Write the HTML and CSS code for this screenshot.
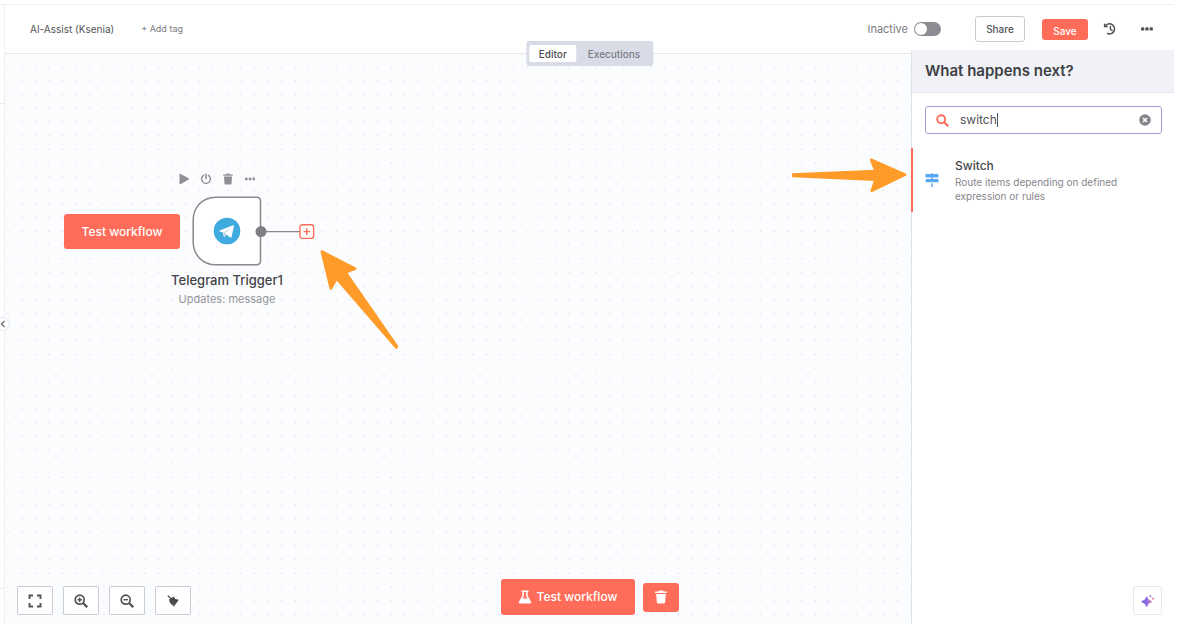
FILE: index.html
```html
<!DOCTYPE html>
<html lang="en">
<head>
<meta charset="utf-8">
<meta name="viewport" content="width=device-width, initial-scale=1">
<title>AI-Assist (Ksenia)</title>
<link rel="stylesheet" href="styles.css">
</head>
<body>
<div class="app">
  <aside class="rail">
    <button class="rail-toggle" type="button" aria-label="Expand sidebar">
      <svg width="6" height="8" viewBox="0 0 6 8"><path d="M4.600 1L1.500 4l3.100 3" fill="none" stroke="#77787d" stroke-width="1.500"/></svg>
    </button>
  </aside>
  <div class="main">
    <header class="topbar">
      <h1 class="workflow-name">AI-Assist (Ksenia)</h1>
      <button class="add-tag" type="button">+ Add tag</button>
      <div class="actions">
        <label class="activator"><span>Inactive</span><input class="switch" type="checkbox" role="switch"></label>
        <button class="btn-outline" type="button">Share</button>
        <button class="btn-save" type="button">Save</button>
        <button class="icon-btn history" type="button" aria-label="Workflow history">
          <svg width="14" height="14" viewBox="0 0 14 14" fill="none" stroke="#525356" stroke-width="1.700"><path d="M3 3.300A5 5 0 1 1 4.100 11.300"/><path d="M7.400 4v3.300l2.100 1.500" stroke-width="1.400"/><path d="M.9.900v4.400h4.400z" fill="#525356" stroke="none"/></svg>
        </button>
        <button class="icon-btn" type="button" aria-label="More options">
          <svg width="14" height="14" viewBox="0 0 14 14" fill="#525356"><rect x="1" y="5.300" width="3.300" height="3.300" rx="1.200"/><rect x="5.300" y="5.300" width="3.300" height="3.300" rx="1.200"/><rect x="9.600" y="5.300" width="3.300" height="3.300" rx="1.200"/></svg>
        </button>
      </div>
      <nav class="tabs">
        <button class="tab tab-active" type="button">Editor</button>
        <button class="tab" type="button">Executions</button>
      </nav>
    </header>

    <main class="canvas">
      <svg class="grid" width="100%" height="100%" aria-hidden="true">
        <defs><pattern id="dots" x="-4" y="6" width="13.680" height="13.680" patternUnits="userSpaceOnUse"><circle cx="7" cy="7" r=".75" fill="#d9dbe1"/></pattern></defs>
        <rect width="100%" height="100%" fill="url(#dots)"/>
      </svg>

      <button class="btn-primary node-run" type="button">Test workflow</button>
      <div class="node-tools">
        <button class="icon-btn" type="button" aria-label="Execute step"><svg width="12" height="12" viewBox="0 0 12 12"><path d="M1.500 1.300v9.400q0 .9.800.5l8.500-4.700q.7-.5 0-1L2.300.8q-.8-.4-.8.5z" fill="#8e8f95"/></svg></button>
        <button class="icon-btn" type="button" aria-label="Deactivate"><svg width="12" height="12" viewBox="0 0 12 12" fill="none" stroke="#8e8f95" stroke-width="1.500" stroke-linecap="round"><path d="M3.600 2.300a4.400 4.400 0 1 0 4.800 0M6 1v4.600"/></svg></button>
        <button class="icon-btn" type="button" aria-label="Delete"><svg width="12" height="12" viewBox="0 0 12 12" fill="#8e8f95"><path d="M1.300 1.400h2.800L4.700.6h2.600l.6.8h2.800v1.300H1.300zM2 3.400h8l-.5 7.100q-.1.900-1 .9h-5q-.9 0-1-.9z"/></svg></button>
        <button class="icon-btn" type="button" aria-label="More"><svg width="12" height="12" viewBox="0 0 12 12" fill="#8e8f95"><circle cx="2.300" cy="6" r="1.450"/><circle cx="6" cy="6" r="1.450"/><circle cx="9.700" cy="6" r="1.450"/></svg></button>
      </div>
      <svg class="node" width="70" height="70" viewBox="0 0 70 70">
        <path d="M24 1.200h40.500q4 0 4 4v59.600q0 4-4 4H24C10 68.800 1.200 58 1.200 46V24C1.200 12 10 1.200 24 1.200z" fill="#fff" stroke="#88898e" stroke-width="1.500"/>
        <g transform="translate(21 21)"><circle cx="14" cy="14" r="13.300" fill="#3fabdf"/><path d="M6.200 13.800L20 8.200q1.100-.3.900.8l-2.300 11q-.3 1.100-1.300.5l-3.700-2.700-1.900 1.900q-.5.500-.9-.2l-1.200-4.200-3.400-1q-.9-.2 0-.5z" fill="#fff"/><path d="M10.300 15.400l7.800-5-6.100 6.200-.3 3-1-.6z" fill="#c7dcea"/><path d="M12 16.600l1.600 1.200-1.900 1.900z" fill="#a5c9df"/></g>
      </svg>
      <svg class="wire" width="60" height="16" viewBox="0 0 60 16"><path d="M6 7.600h40" stroke="#88898e" stroke-width="1.400"/><circle cx="6" cy="7.600" r="5.500" fill="#7e7f84"/></svg>
      <button class="node-add" type="button" aria-label="Add node"><svg width="16" height="16" viewBox="0 0 16 16"><rect x="1" y=".8" width="13.600" height="13.600" rx="2.500" fill="#fff" stroke="#ff6d5a" stroke-width="1.400"/><path d="M7.800 4.300v6.600M4.500 7.600h6.600" stroke="#ff6d5a" stroke-width="1.400"/></svg></button>
      <div class="node-label">
        <div class="node-title">Telegram Trigger1</div>
        <div class="node-sub">Updates: message</div>
      </div>

      <svg class="arrow arrow-add" width="90" height="110" viewBox="0 0 90 110"><path d="M6.800 7.500L40.200 24.700 30.500 28.200 82 102.500 81.200 103.500 21.500 34.500 15.800 44.500z" fill="#ff9b28" stroke="#ff9b28" stroke-width="2.600" stroke-linejoin="round"/></svg>
      <svg class="arrow arrow-result" width="130" height="50" viewBox="0 0 130 50"><path d="M8.200 24.600L90.500 21 86.200 9.800 120.200 24.600 86.700 40.800 90.500 29.600 8.200 25.900z" fill="#ff9b28" stroke="#ff9b28" stroke-width="2.600" stroke-linejoin="round"/></svg>

      <div class="view-controls">
        <button class="control" type="button" aria-label="Fit view"><svg width="14" height="14" viewBox="0 0 14 14" fill="none" stroke="#525356" stroke-width="1.900"><path d="M1.500 5V1.500H5M9 1.500h3.500V5M12.500 9v3.500H9M5 12.500H1.500V9"/></svg></button>
        <button class="control" type="button" aria-label="Zoom in"><svg width="14" height="14" viewBox="0 0 14 14" fill="none" stroke="#525356"><circle cx="5.700" cy="5.700" r="4.500" stroke-width="1.700"/><path d="M9 9l4.200 4.200" stroke-width="2.300"/><path d="M5.700 3.500v4.400M3.500 5.700h4.400" stroke-width="1.400"/></svg></button>
        <button class="control" type="button" aria-label="Zoom out"><svg width="14" height="14" viewBox="0 0 14 14" fill="none" stroke="#525356"><circle cx="5.700" cy="5.700" r="4.500" stroke-width="1.700"/><path d="M9 9l4.200 4.200" stroke-width="2.300"/><path d="M3.500 5.700h4.400" stroke-width="1.400"/></svg></button>
        <button class="control" type="button" aria-label="Tidy up"><svg width="14" height="14" viewBox="0 0 14 14"><path d="M1.700 1.700l3.700 3.100" stroke="#525356" stroke-width="1.300"/><path d="M3 5.600L8 2.600l1.200 2.300 3.600.9L8 12.400 5.900 10.800 4.200 9z" fill="#46474a"/><path d="M6 9l1.500-1.300M7 11l2-1.800" stroke="#8b8c90" stroke-width=".6"/></svg></button>
      </div>
      <div class="run-controls">
        <button class="btn-primary run" type="button"><svg width="14" height="14" viewBox="0 0 14 14"><path d="M3.500.5h7v1.600h-.8v3.600l3.400 6q.7 1.800-1.100 1.800H2q-1.800 0-1.100-1.800l3.400-6V2.100h-.8zM5.900 2.100v4L4.600 8.600h4.800L8.100 6.100v-4z" fill="#fff" fill-rule="evenodd"/></svg>Test workflow</button>
        <button class="btn-primary clear" type="button" aria-label="Clear execution"><svg width="14" height="14" viewBox="0 0 14 14" fill="#fff"><path d="M1 1.600h3.500L5 .5h4l.5 1.100H13v1.500H1zM2.200 3.900h9.600l-.6 8.200q-.1 1.400-1.300 1.400H4.100q-1.200 0-1.300-1.400z"/></svg></button>
      </div>
    </main>

    <section class="panel">
      <h2 class="panel-title">What happens next?</h2>
      <label class="search">
        <svg width="13" height="13" viewBox="0 0 13 13" fill="none" stroke="#ff6d5a"><circle cx="5.200" cy="5.200" r="4" stroke-width="1.900"/><path d="M8.200 8.200l4 4" stroke-width="2.200"/></svg>
        <input class="search-input" type="text" value="switch" aria-label="Search nodes"><span class="caret"></span>
        <button class="search-clear icon-btn" type="button" aria-label="Clear search"><svg width="12" height="12" viewBox="0 0 12 12"><circle cx="6" cy="6" r="5.800" fill="#85868b"/><path d="M4 4l4 4M8 4l-4 4" stroke="#fff" stroke-width="1.700"/></svg></button>
      </label>
      <a class="result" href="#switch">
        <svg width="14" height="14" viewBox="0 0 14 14" fill="#5ba8f5"><path d="M6.300 0h1.400v1h5.200l.9 1.700-.9 1.700H.5V1h5.800zM1.300 6h12.200v3.300H1.300L.2 7.700zM6.300 4h1.400v2.500H6.300zM6.300 10.300h1.400V14H6.300z"/></svg>
        <span class="result-text">
          <span class="result-name">Switch</span>
          <span class="result-desc">Route items depending on defined expression or rules</span>
        </span>
      </a>
      <button class="assistant" type="button" aria-label="Assistant">
        <svg width="14" height="14" viewBox="0 0 14 14"><defs><linearGradient id="spark"><stop offset="0" stop-color="#5b60e8"/><stop offset=".6" stop-color="#9b6ddd"/><stop offset="1" stop-color="#dd7fae"/></linearGradient></defs><path d="M5.700 2.800q.8 3.900 5 4.900-4.200 1-5 4.900-.8-3.900-5-4.900 4.200-1 5-4.900z" fill="url(#spark)" stroke="url(#spark)"/><path d="M9.300.4l.6 1.200 1.200.6-1.200.6-.6 1.200-.6-1.200-1.200-.6 1.200-.6z" fill="#b58be0"/><path d="M12 3l.6 1.200 1.200.6-1.200.6-.6 1.200-.6-1.200-1.200-.6 1.200-.6z" fill="#e08bb8"/></svg>
      </button>
    </section>
  </div>
</div>
</body>
</html>
```
FILE: styles.css
```css
* { box-sizing: border-box; }

body {
  margin: 0;
  background: #fff;
  color: #525356;
  font: 11px/16px Inter, "Liberation Sans", sans-serif;
}

button, input { font: inherit; color: inherit; }
button { cursor: pointer; padding: 0; border: 0; }
svg { display: block; flex: none; }
h1, h2 { margin: 0; }

.app {
  display: flex;
  min-height: calc(100vh - 4px);
  margin: 4px 6px 0 0;
  border-top: 1px solid #eeeff2;
}

.rail {
  position: relative;
  display: flex;
  flex-direction: column;
  width: 5px;
  padding: 98px 0 35px;
  border-right: 1px solid #edf0f4;
}

.rail::before, .rail::after {
  content: "";
  height: 1px;
  background: #e9ecf1;
}

.rail::after { margin-top: auto; }

.rail-toggle {
  position: absolute;
  top: 312px;
  left: -4px;
  z-index: 2;
  width: 14px;
  height: 14px;
  display: flex;
  align-items: center;
  justify-content: center;
  border: 1px solid #e4e7ee;
  border-radius: 50%;
  background: #fff;
}

.main {
  position: relative;
  flex: 1;
  display: flex;
  flex-direction: column;
}

.topbar {
  position: relative;
  display: flex;
  align-items: center;
  height: 49px;
  padding: 0 20px 0 25px;
  border-bottom: 1px solid #e6e8ed;
}

.workflow-name { font-size: 10px; font-weight: 400; }

.add-tag {
  margin-left: 27px;
  background: none;
  color: #77787d;
  font-size: 9px;
}

.actions {
  display: flex;
  align-items: center;
  margin-left: auto;
}

.activator {
  display: flex;
  align-items: center;
  gap: 6px;
  margin-right: 34px;
  color: #7b7c82;
}

.switch {
  appearance: none;
  width: 27px;
  height: 14px;
  margin: 0;
  padding: 1px;
  border-radius: 7px;
  background: #8c8d93;
}

.switch::before {
  content: "";
  display: block;
  width: 12px;
  height: 12px;
  border-radius: 50%;
  background: #fff;
}

.btn-outline {
  width: 50px;
  height: 26px;
  border: 1px solid #c9ccd4;
  border-radius: 3px;
  background: #fff;
  font-size: 10px;
  font-weight: 500;
}

.btn-save {
  width: 46px;
  height: 21px;
  margin: 0 15px 0 17px;
  padding-top: 3px;
  border-radius: 3px;
  background: #ff6d5a;
  color: #fff;
  font-size: 10px;
  font-weight: 500;
}

.icon-btn { background: none; }
.history { margin-right: 23px; }

.tabs {
  position: absolute;
  bottom: -13px;
  left: 50%;
  z-index: 1;
  display: flex;
  gap: 1px;
  padding: 4px 3px;
  border-radius: 3px;
  background: #d8dce7;
  transform: translateX(-50%);
}

.tab {
  height: 17px;
  padding: 0 10px;
  border-radius: 2px;
  background: none;
  color: #7b7c84;
  font-size: 10px;
  font-weight: 500;
}

.tab-active { background: #fff; color: #4b4c50; }

.canvas {
  position: relative;
  flex: 1;
  overflow: hidden;
  background: #fbfcfe;
}

.grid { position: absolute; inset: 0; }

.btn-primary {
  border-radius: 3px;
  background: #ff6d5a;
  color: #fff;
  font-size: 12px;
  font-weight: 500;
}

.node-run {
  position: absolute;
  left: 59px;
  top: 160px;
  width: 116px;
  height: 35px;
}

.node-tools {
  position: absolute;
  left: 173px;
  top: 119px;
  display: flex;
  gap: 10px;
}

.node { position: absolute; left: 187px; top: 142px; }

.wire { position: absolute; left: 250px; top: 170px; }

.node-add {
  position: absolute;
  left: 294px;
  top: 170px;
  background: none;
}

.node-label {
  position: absolute;
  left: 142px;
  top: 216px;
  width: 160px;
  text-align: center;
}

.node-title { font-size: 13px; line-height: 20px; font-weight: 500; color: #444548; }
.node-sub { font-size: 11px; line-height: 18px; color: #94959b; }

.arrow { position: absolute; }
.arrow-add { left: 310px; top: 190px; }
.arrow-result { right: 259px; top: 96px; }

.view-controls {
  position: absolute;
  left: 12px;
  bottom: 9px;
  display: flex;
  gap: 10px;
}

.control {
  width: 36px;
  height: 29px;
  display: flex;
  align-items: center;
  justify-content: center;
  border: 1px solid #c9ccd4;
  border-radius: 2px;
  background: #fff;
}

.run-controls {
  position: absolute;
  left: 50%;
  bottom: 9px;
  display: flex;
  align-items: center;
  gap: 8px;
  transform: translateX(-50%);
}

.run {
  display: flex;
  align-items: center;
  justify-content: center;
  gap: 5px;
  width: 134px;
  height: 36px;
}

.clear {
  display: flex;
  align-items: center;
  justify-content: center;
  width: 36px;
  height: 29px;
}

.panel {
  position: absolute;
  top: 45px;
  right: 0;
  bottom: 0;
  width: 263px;
  border-left: 1px solid #dfe2e9;
  background: #fff;
}

.panel-title {
  padding: 10px 13px;
  border-bottom: 1px solid #e2e5ed;
  background: #f0f2f8;
  color: #3f4043;
  font-size: 15px;
  line-height: 22px;
  font-weight: 600;
}

.search {
  display: flex;
  align-items: center;
  height: 28px;
  margin: 13px 12px 14px 13px;
  padding: 0 10px;
  border: 1px solid #a39cdc;
  border-radius: 3px;
}

.search-input {
  field-sizing: content;
  margin-left: 11px;
  padding: 0;
  border: 0;
  outline: 0;
  background: none;
  font-size: 12px;
}

.caret { width: 1px; height: 14px; background: #525356; }
.search-clear { margin-left: auto; }

.result {
  display: flex;
  align-items: center;
  gap: 16px;
  margin-left: -1px;
  padding: 9px 40px 9px 12px;
  border-left: 2px solid #ff6d5a;
  color: inherit;
  text-decoration: none;
}

.result-text { display: flex; flex-direction: column; }
.result-name { font-size: 12px; line-height: 18px; font-weight: 500; color: #444548; }
.result-desc { font-size: 10px; line-height: 14px; color: #85868b; }

.assistant {
  position: absolute;
  right: 12px;
  bottom: 9px;
  width: 29px;
  height: 29px;
  display: flex;
  align-items: center;
  justify-content: center;
  border: 1px solid #e6e6f0;
  border-radius: 3px;
  background: #fff;
}
```
